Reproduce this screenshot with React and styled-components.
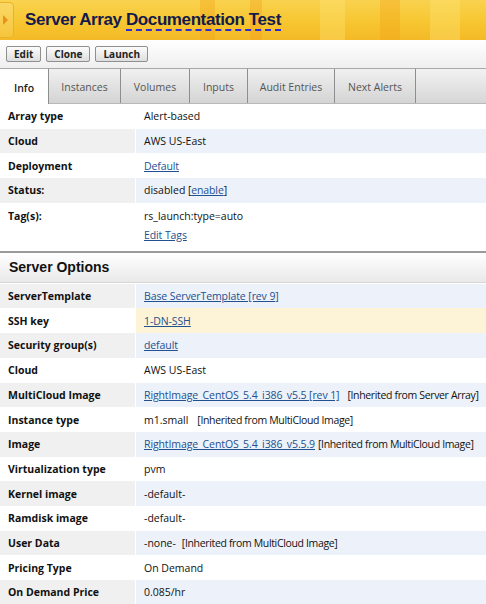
import React from "react";
import styled, { createGlobalStyle } from "styled-components";

const GlobalStyle = createGlobalStyle`
  html, body {
    margin: 0;
    padding: 0;
    background: #fff;
  }
  body {
    font-family: "Open Sans", "Liberation Sans", Arial, sans-serif;
    font-size: 10.5px;
    color: #111;
    width: 486px;
    overflow: hidden;
  }
`;

const Page = styled.div`
  width: 486px;
  height: 604px;
  overflow: hidden;
`;

const Header = styled.div`
  height: 40px;
  display: flex;
  align-items: center;
  gap: 11px;
  background-color: #f7c22e;
  background-image:
    linear-gradient(90deg, transparent 0 200px, rgba(240,160,20,0.35) 200px 215px, transparent 215px 250px, rgba(240,150,20,0.3) 250px 262px, transparent 262px 320px, rgba(255,230,120,0.35) 320px 345px, transparent 345px 380px, rgba(240,160,20,0.35) 380px 400px, transparent 400px 430px, rgba(255,230,120,0.35) 430px 460px, transparent 460px),
    linear-gradient(180deg, #f9d24f 0%, #f7c631 55%, #f4b928 100%);
`;

const Handle = styled.div`
  width: 13px;
  height: 34px;
  border-radius: 0 5px 5px 0;
  background: linear-gradient(180deg, #fad866, #f6c53c);
  border: 1px solid #e9b22c;
  border-left: none;
  display: flex;
  align-items: center;
  justify-content: center;
  &::after {
    content: "";
    border-left: 5px solid #e8921a;
    border-top: 5px solid transparent;
    border-bottom: 5px solid transparent;
    margin-left: -2px;
  }
`;

const Title = styled.h1`
  margin: 0;
  font-family: "Liberation Sans", Arial, sans-serif;
  font-size: 17px;
  font-weight: bold;
  color: #131a4c;
  letter-spacing: -0.4px;
  margin-top: -1px;
`;

const Editable = styled.span`
  border-bottom: 2px dashed #2b2bd8;
`;

const Toolbar = styled.div`
  height: 28px;
  display: flex;
  align-items: center;
  gap: 5px;
  padding: 0 6px;
  background: linear-gradient(180deg, #ffffff, #efefef);
`;

const Button = styled.button`
  height: 16px;
  padding: 0 7px;
  border: 1px solid #8f8f8f;
  border-radius: 2px;
  background: linear-gradient(180deg, #fcfcfc, #dedede);
  font-family: "Open Sans", "Liberation Sans", Arial, sans-serif;
  font-size: 10px;
  font-weight: bold;
  color: #222;
  line-height: 14px;
`;

const Tabs = styled.div`
  display: flex;
  height: 34px;
  border-top: 1px solid #a8a8a8;
  border-bottom: 1px solid #b9b9b9;
  background: linear-gradient(180deg, #f2f2f2, #d6d6d6);
`;

const Tab = styled.div`
  width: ${(p) => p.$w}px;
  flex: none;
  display: flex;
  align-items: center;
  justify-content: center;
  box-sizing: border-box;
  border-right: 1px solid #8e8e8e;
  padding-top: 2px;
  color: ${(p) => (p.$active ? "#222" : "#555")};
  font-weight: ${(p) => (p.$active ? 600 : 400)};
  background: ${(p) => (p.$active ? "#fff" : "linear-gradient(180deg, #f0f0f0, #d4d4d4)")};
  margin-bottom: ${(p) => (p.$active ? "-1px" : "0")};
`;

const Table = styled.div`
  display: grid;
  grid-template-columns: 136px 1fr;
`;

const Label = styled.div`
  min-height: 24.7px;
  display: flex;
  align-items: ${(p) => (p.$top ? "flex-start" : "center")};
  padding: ${(p) => (p.$top ? "6px 8px 0" : "0 8px")};
  font-weight: bold;
  color: #111;
  background: ${(p) => (p.$shade ? "#f0f0f0" : "#fff")};
  border-right: 1px solid #fff;
`;

const Value = styled.div`
  min-height: 24.7px;
  display: flex;
  flex-direction: ${(p) => (p.$stack ? "column" : "row")};
  align-items: ${(p) => (p.$stack ? "flex-start" : "center")};
  gap: ${(p) => (p.$stack ? "5px" : "0")};
  padding: ${(p) => (p.$stack ? "6px 8px 8px" : "0 8px")};
  white-space: pre;
  background: ${(p) => (p.$highlight ? "#fdf3d7" : p.$shade ? "#edf1f9" : "#fff")};
`;

const Link = styled.a`
  color: #23508f;
  text-decoration: underline;
  letter-spacing: -0.1px;
`;

const Note = styled.span`
  margin-left: ${(p) => p.$gap || 0}px;
  letter-spacing: -0.35px;
`;

const SectionHeader = styled.div`
  margin-top: 1px;
  height: 29px;
  border-top: 2px solid #9a9a9a;
  border-bottom: 1px solid #d6d6d6;
  background: linear-gradient(180deg, #ffffff, #e9e9e9);
  display: flex;
  align-items: center;
  padding: 0 9px;
  font-family: "Liberation Sans", Arial, sans-serif;
  font-size: 14px;
  font-weight: bold;
  color: #111;
  margin-bottom: 1px;
`;

const tabs = [
  ["Info", 49],
  ["Instances", 72],
  ["Volumes", 69],
  ["Inputs", 58],
  ["Audit Entries", 87],
  ["Next Alerts", 81],
];

const Row = ({ label, shade, highlight, children, stack, top }) => (
  <>
    <Label $shade={shade} $top={top}>{label}</Label>
    <Value $shade={shade} $highlight={highlight} $stack={stack}>
      {children}
    </Value>
  </>
);

export default function App() {
  return (
    <Page>
      <GlobalStyle />
      <Header>
        <Handle />
        <Title>
          Server Array <Editable>Documentation Test</Editable>
        </Title>
      </Header>
      <Toolbar>
        <Button>Edit</Button>
        <Button>Clone</Button>
        <Button>Launch</Button>
      </Toolbar>
      <Tabs>
        {tabs.map(([name, w], i) => (
          <Tab key={name} $w={w} $active={i === 0}>
            {name}
          </Tab>
        ))}
      </Tabs>
      <Table>
        <Row label="Array type">Alert-based</Row>
        <Row label="Cloud" shade>AWS US-East</Row>
        <Row label="Deployment">
          <Link>Default</Link>
        </Row>
        <Row label="Status:" shade>
          disabled <Note>[<Link>enable</Link>]</Note>
        </Row>
        <Row label="Tag(s):" stack top>
          <span>rs_launch:type=auto</span>
          <Link>Edit Tags</Link>
        </Row>
      </Table>
      <SectionHeader>Server Options</SectionHeader>
      <Table>
        <Row label="ServerTemplate" shade>
          <Link>Base ServerTemplate [rev 9]</Link>
        </Row>
        <Row label="SSH key" highlight>
          <Link>1-DN-SSH</Link>
        </Row>
        <Row label="Security group(s)" shade>
          <Link>default</Link>
        </Row>
        <Row label="Cloud">AWS US-East</Row>
        <Row label="MultiCloud Image" shade>
          <Link>RightImage_CentOS_5.4_i386_v5.5 [rev 1]</Link>
          <Note $gap={8}>[Inherited from Server Array]</Note>
        </Row>
        <Row label="Instance type">
          m1.small<Note $gap={9}>[Inherited from MultiCloud Image]</Note>
        </Row>
        <Row label="Image" shade>
          <Link>RightImage_CentOS_5.4_i386_v5.5.9</Link>
          <Note $gap={3}>[Inherited from MultiCloud Image]</Note>
        </Row>
        <Row label="Virtualization type">pvm</Row>
        <Row label="Kernel image" shade>-default-</Row>
        <Row label="Ramdisk image">-default-</Row>
        <Row label="User Data" shade>
          -none-<Note $gap={6}>[Inherited from MultiCloud Image]</Note>
        </Row>
        <Row label="Pricing Type">On Demand</Row>
        <Row label="On Demand Price" shade>0.085/hr</Row>
      </Table>
    </Page>
  );
}
